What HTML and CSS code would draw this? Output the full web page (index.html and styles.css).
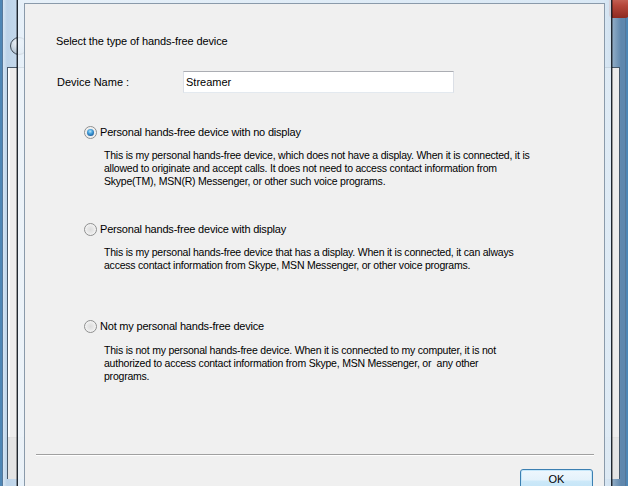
FILE: index.html
```html
<!DOCTYPE html>
<html>
<head>
<meta charset="utf-8">
<link rel="stylesheet" href="styles.css">
</head>
<body>
<div class="desktop">
  <div class="back-window">
    <div class="back-close"></div>
    <div class="back-btn"></div>
    <div class="back-content"><div class="back-cmd"></div></div>
  </div>
  <div class="front-window">
    <div class="content">
      <p class="heading">Select the type of hands-free device</p>
      <div class="name-row">
        <span class="name-label">Device Name :</span>
        <div class="textbox">Streamer</div>
      </div>
      <div class="options">
        <div class="option">
          <div class="opt-row"><span class="radio checked"></span><span class="opt-label">Personal hands-free device with no display</span></div>
          <p class="desc">This is my personal hands-free device, which does not have a display. When it is connected, it is<br>allowed to originate and accept calls. It does not need to access contact information from<br>Skype(TM), MSN(R) Messenger, or other such voice programs.</p>
        </div>
        <div class="option">
          <div class="opt-row"><span class="radio"></span><span class="opt-label">Personal hands-free device with display</span></div>
          <p class="desc">This is my personal hands-free device that has a display. When it is connected, it can always<br>access contact information from Skype, MSN Messenger, or other voice programs.</p>
        </div>
        <div class="option">
          <div class="opt-row"><span class="radio"></span><span class="opt-label">Not my personal hands-free device</span></div>
          <p class="desc desc-low">This is not my personal hands-free device. When it is connected to my computer, it is not<br>authorized to access contact information from Skype, MSN Messenger, or &nbsp;any other<br>programs.</p>
        </div>
      </div>
      <div class="separator"></div>
      <div class="footer"><button class="ok-btn">OK</button></div>
    </div>
  </div>
</div>
</body>
</html>
```
FILE: styles.css
```css
html, body {
  margin: 0;
  padding: 0;
}
body {
  width: 628px;
  height: 486px;
  overflow: hidden;
  font-family: "Liberation Sans", Arial, sans-serif;
  font-size: 11px;
  color: #000;
}
.desktop {
  position: relative;
  width: 628px;
  height: 486px;
  overflow: hidden;
  background: #4d86b5;
}
.back-window {
  position: absolute;
  left: 2px;
  top: -30px;
  width: 622px;
  height: 520px;
  border: 1px solid #56789a;
  border-radius: 6px;
  background: linear-gradient(90deg, #d6e6f4 0px, #bcd3e8 4px, #c9dcee 20px, #c9dcee 600px, #8eaac4 610px, #5f87ad 618px);
}
.back-close {
  position: absolute;
  left: 606px;
  top: 19px;
  width: 20px;
  height: 28px;
  border-radius: 0 0 4px 4px;
  background: linear-gradient(180deg, #d88a7e 0%, #b6473a 55%, #8e2a20 100%);
}
.back-btn {
  position: absolute;
  left: 7px;
  top: 66px;
  width: 16px;
  height: 16px;
  border-radius: 50%;
  border: 1px solid #3f4a56;
  background: radial-gradient(circle at 40% 30%, #f2f6fa, #a9bccd 80%);
}
.back-content {
  position: absolute;
  left: 4px;
  top: 96px;
  width: 611px;
  height: 410px;
  border: 1px solid #48596a;
  background: #ececec;
  box-shadow: inset 1px 0 0 #fff, inset 2px 0 0 #fbfbfb;
}
.back-cmd {
  margin-top: 369px;
  height: 41px;
  border-top: 1px solid #e0e0e0;
  background: #e4e4e4;
}
.front-window {
  position: absolute;
  left: 17px;
  top: -4px;
  width: 595px;
  height: 520px;
  padding: 6px;
  box-sizing: border-box;
  border: 1px solid #1f2730;
  box-shadow: -1px 0 0 rgba(0, 0, 0, 0.35), 1px 0 0 rgba(0, 0, 0, 0.35);
  background: linear-gradient(90deg, rgba(236, 244, 251, 0.85), rgba(220, 234, 246, 0.85));
}
.content {
  height: 100%;
  box-sizing: border-box;
  border: 1px solid #8a9aaa;
  background: #f0f0f0;
  padding-top: 31px;
}
.heading {
  margin: 0 0 0 31px;
  line-height: 13px;
  letter-spacing: -0.11px;
}
.name-row {
  display: flex;
  align-items: center;
  margin-top: 23px;
  padding-left: 32px;
  height: 22px;
}
.name-label {
  width: 126px;
  line-height: 13px;
}
.textbox {
  width: 271px;
  height: 22px;
  box-sizing: border-box;
  border: 1px solid #dbdfe6;
  border-top-color: #abadb3;
  border-bottom-color: #e3e9ef;
  background: #fff;
  padding: 4px 0 0 2px;
  line-height: 13px;
}
.options {
  margin-top: 33px;
  padding-left: 59px;
}
.option {
  height: 97px;
}
.opt-row {
  display: flex;
  align-items: center;
  height: 13px;
}
.radio {
  position: relative;
  width: 13px;
  height: 13px;
  box-sizing: border-box;
  border-radius: 50%;
  border: 1px solid #8e8f8f;
  background: radial-gradient(circle at 50% 50%, #dcdcdc 0%, #e9e9e9 45%, #f6f6f6 75%, #fdfdfd 100%);
  flex: none;
}
.radio.checked::after {
  content: "";
  position: absolute;
  left: 2px;
  top: 2px;
  width: 7px;
  height: 7px;
  border-radius: 50%;
  background: radial-gradient(circle at 45% 35%, #b9e4fb 0%, #4aa5de 35%, #1a63a6 75%, #0f4a86 100%);
}
.opt-label {
  margin-left: 3px;
  line-height: 13px;
  white-space: nowrap;
  letter-spacing: -0.2px;
}
.desc {
  margin: 10px 0 0 20px;
  line-height: 13px;
  white-space: nowrap;
  font-size: 10.5px;
  letter-spacing: -0.22px;
}
.desc-low {
  margin-top: 11px;
}
.separator {
  margin: 37px 10px 0 11px;
  border-top: 1px solid #a0a0a0;
  border-bottom: 1px solid #ffffff;
}
.footer {
  display: flex;
  justify-content: flex-end;
  padding-right: 11px;
  margin-top: 13px;
}
.ok-btn {
  width: 73px;
  height: 23px;
  box-sizing: border-box;
  border: 1px solid #3c7fb1;
  border-radius: 3px;
  font-family: "Liberation Sans", Arial, sans-serif;
  font-size: 11px;
  color: #000;
  padding: 0 0 2px 0;
  line-height: 13px;
  background: linear-gradient(180deg, #eef7fd 0%, #e4f2fb 48%, #cde9f9 52%, #bfe2f6 100%);
  box-shadow: inset 0 0 0 1px #c5e7fa;
}
```
